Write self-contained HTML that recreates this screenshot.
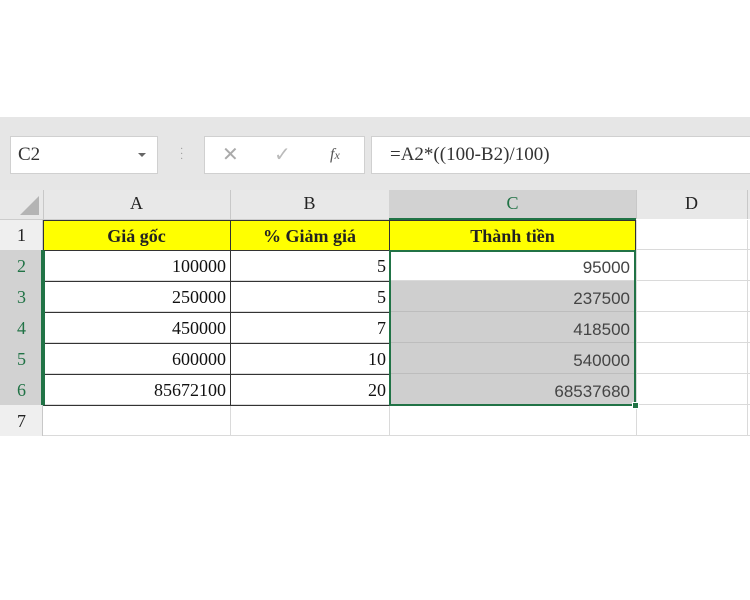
<!DOCTYPE html>
<html><head><meta charset="utf-8"><style>
*{margin:0;padding:0;box-sizing:border-box}
body{width:750px;height:600px;background:#fff;position:relative;overflow:hidden;font-family:"Liberation Serif",serif}
.a{position:absolute}
.t{font-size:17px;color:#222;line-height:30px}
.h{font-size:18px;text-align:center;color:#222}
.n{text-align:right;padding-right:4px;font-size:18px;color:#111}
.c{font-family:"Liberation Sans",sans-serif;font-size:17px;color:#444;text-align:right;padding-right:4px}
</style></head><body>
<div class="a" style="left:0;top:117px;width:750px;height:73px;background:#e6e6e6"></div>
<div class="a" style="left:10px;top:136px;width:148px;height:38px;background:#fff;border:1px solid #d0d0d0"></div>
<div class="a t" style="left:18px;top:140px;font-size:19px;color:#333">C2</div>
<div class="a" style="left:138px;top:153px;width:0;height:0;border-left:4px solid transparent;border-right:4px solid transparent;border-top:4px solid #666"></div>
<div class="a" style="left:180px;top:147px;color:#999;font-size:10px;line-height:5px">·<br>·<br>·</div>
<div class="a" style="left:204px;top:136px;width:161px;height:38px;background:#fff;border:1px solid #d0d0d0"></div>
<div class="a" style="left:222px;top:140px;font-family:'Liberation Sans';font-size:20px;color:#aaa;line-height:30px">✕</div>
<div class="a" style="left:274px;top:140px;font-size:20px;color:#bbb;line-height:30px">✓</div>
<div class="a" style="left:330px;top:142px;font-size:16px;font-style:italic;color:#555;line-height:26px">f<span style="font-size:12px">x</span></div>
<div class="a" style="left:371px;top:136px;width:380px;height:38px;background:#fff;border:1px solid #d0d0d0"></div>
<div class="a t" style="left:390px;top:140px;font-size:19px;color:#333">=A2*((100-B2)/100)</div>
<!-- header row -->
<div class="a" style="left:0;top:190px;width:750px;height:30px;background:#e8e8e8;border-bottom:1px solid #ccc"></div>
<div class="a" style="left:389px;top:190px;width:247px;height:30px;background:#d2d2d2;border-bottom:2px solid #217346"></div>
<div class="a" style="left:20px;top:196px;width:0;height:0;border-left:19px solid transparent;border-bottom:19px solid #b4b4b4"></div>
<div class="a" style="left:43px;top:190px;width:1px;height:30px;background:#c8c8c8"></div>
<div class="a" style="left:230px;top:190px;width:1px;height:30px;background:#c8c8c8"></div>
<div class="a" style="left:636px;top:190px;width:1px;height:30px;background:#c8c8c8"></div>
<div class="a" style="left:747px;top:190px;width:1px;height:30px;background:#c8c8c8"></div>
<div class="a h" style="left:43px;top:193px;width:187px">A</div>
<div class="a h" style="left:230px;top:193px;width:159px">B</div>
<div class="a h" style="left:389px;top:193px;width:247px;color:#217346">C</div>
<div class="a h" style="left:636px;top:193px;width:111px">D</div>
<!-- row headers -->
<div class="a" style="left:0;top:220px;width:43px;height:216px;background:#efefef;border-right:1px solid #c8c8c8"></div>
<div class="a" style="left:0;top:250px;width:43px;height:155px;background:#d2d2d2;border-right:2px solid #217346"></div>
<div class="a" style="left:0;top:220px;width:43px;font-size:18px;line-height:31px;text-align:center;color:#222">1<br><span style="color:#217346">2<br>3<br>4<br>5<br>6</span><br>7</div>
<!-- grid lines -->
<div class="a" style="left:43px;top:250px;width:707px;height:186px;background:repeating-linear-gradient(#fff 0 30px,#dadada 30px 31px)"></div>
<div class="a" style="left:230px;top:250px;width:1px;height:186px;background:#dadada"></div>
<div class="a" style="left:389px;top:250px;width:1px;height:186px;background:#dadada"></div>
<div class="a" style="left:636px;top:219px;width:114px;height:217px;background:repeating-linear-gradient(#fff 0 30px,#dadada 30px 31px)"></div>
<div class="a" style="left:636px;top:220px;width:1px;height:216px;background:#dadada"></div>
<div class="a" style="left:747px;top:220px;width:1px;height:216px;background:#dadada"></div>
<!-- row1 yellow -->
<div class="a" style="left:43px;top:220px;width:593px;height:31px;background:#ffff00;border:1px solid #333"></div>
<div class="a" style="left:230px;top:220px;width:1px;height:31px;background:#333"></div>
<div class="a" style="left:389px;top:220px;width:1px;height:31px;background:#333"></div>
<div class="a h" style="left:43px;top:222px;width:187px;font-weight:bold;line-height:28px">Giá gốc</div>
<div class="a h" style="left:230px;top:222px;width:159px;font-weight:bold;line-height:28px">% Giảm giá</div>
<div class="a h" style="left:389px;top:222px;width:247px;font-weight:bold;line-height:28px">Thành tiền</div>
<!-- A,B data -->
<div class="a" style="left:43px;top:250px;width:347px;height:156px;background:repeating-linear-gradient(transparent 0 30px,#333 30px 31px);border:1px solid #333;border-left:2px solid #217346"></div>
<div class="a" style="left:230px;top:250px;width:1px;height:156px;background:#333"></div>
<div class="a" style="left:44px;top:251px;width:186px;line-height:31px"><div class="n">100000<br>250000<br>450000<br>600000<br>85672100</div></div>
<div class="a" style="left:231px;top:251px;width:158px;line-height:31px"><div class="n" style="padding-right:3px">5<br>5<br>7<br>10<br>20</div></div>
<!-- C data -->
<div class="a" style="left:390px;top:281px;width:245px;height:124px;background:repeating-linear-gradient(#cfcfcf 0 30px,#bdbdbd 30px 31px)"></div>
<div class="a" style="left:389px;top:250px;width:247px;height:156px;border:2px solid #217346"></div>
<div class="a" style="left:632px;top:402px;width:7px;height:7px;background:#217346;border:1px solid #fff"></div>
<div class="a" style="left:390px;top:252px;width:244px;line-height:31px"><div class="c">95000<br>237500<br>418500<br>540000<br>68537680</div></div>
</body></html>
